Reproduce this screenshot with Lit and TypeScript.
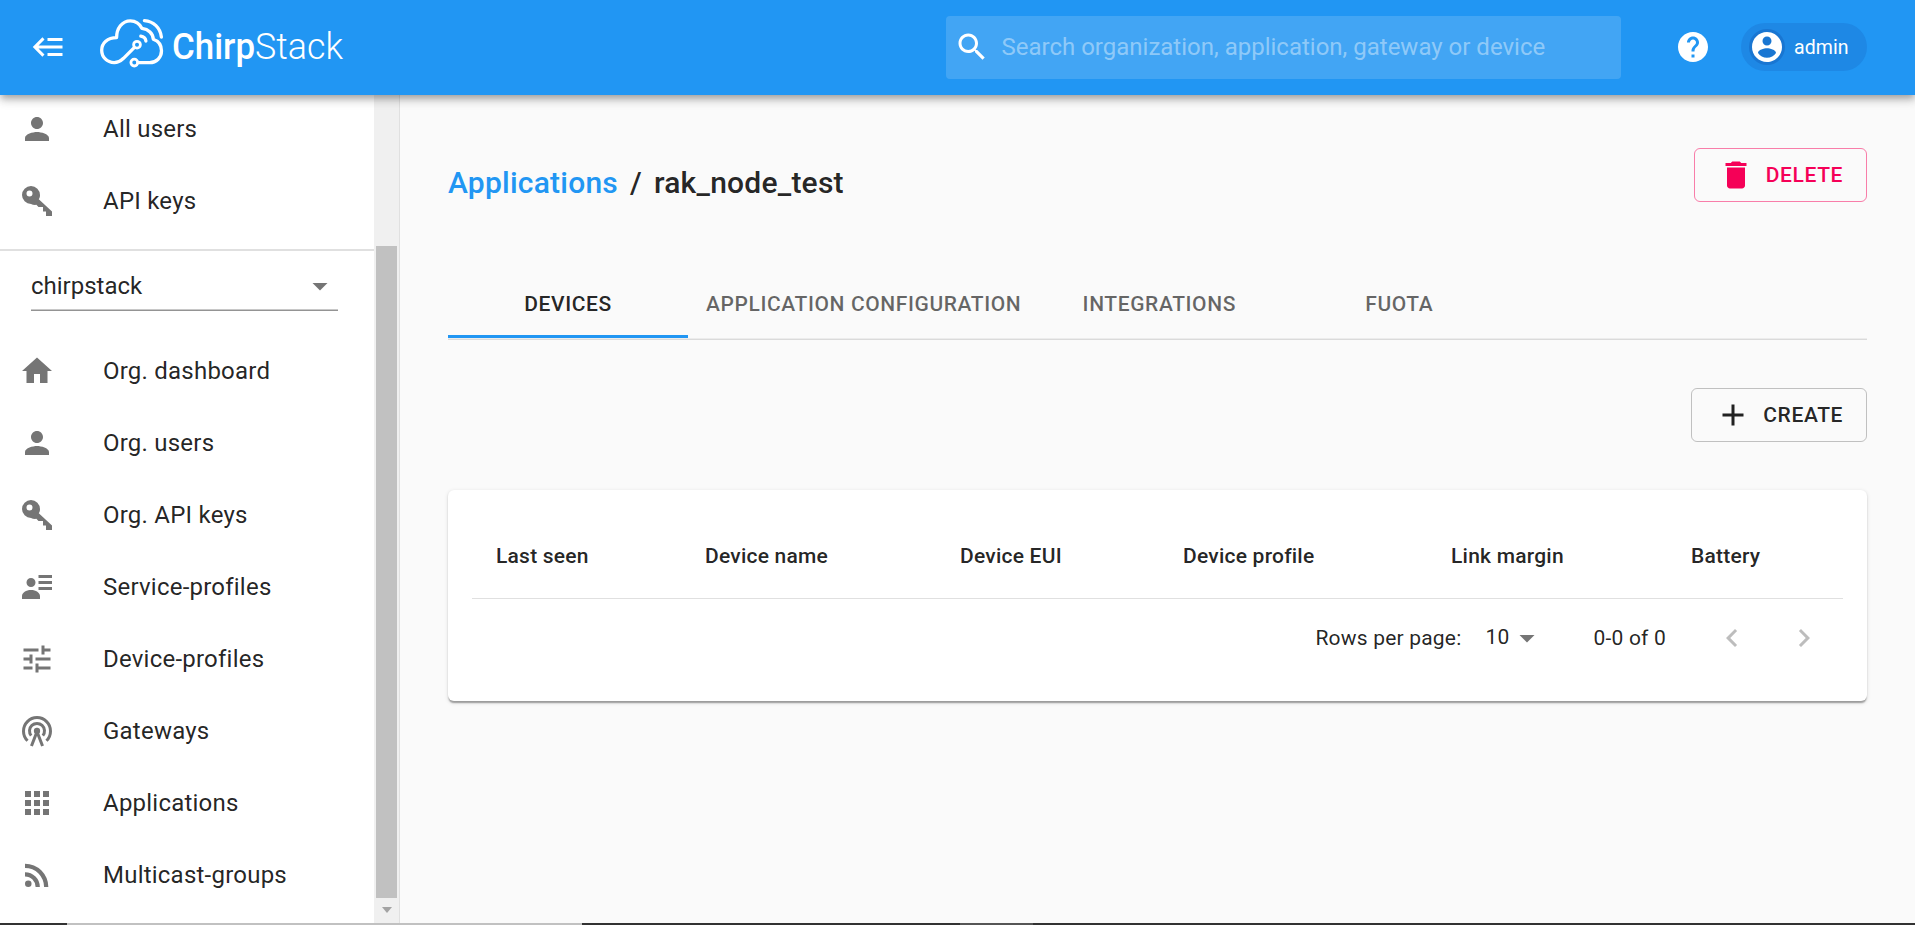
import { LitElement, html, css, svg } from "lit";
import { customElement, property } from "lit/decorators.js";

const ICONS: Record<string, string> = {
  back: "M5,13L9,17L7.6,18.42L1.18,12L7.6,5.58L9,7L5,11H21V13H5M21,6V8H11V6H21M21,16V18H11V16H21Z",
  search: "M15.5 14h-.79l-.28-.27C15.41 12.59 16 11.11 16 9.5 16 5.91 13.09 3 9.5 3S3 5.91 3 9.5 5.91 16 9.5 16c1.61 0 3.09-.59 4.23-1.57l.27.28v.79l5 4.99L20.49 19l-4.99-5zm-6 0C7.01 14 5 11.99 5 9.5S7.01 5 9.5 5 14 7.01 14 9.5 11.99 14 9.5 14z",
  help: "M12 2C6.48 2 2 6.48 2 12s4.48 10 10 10 10-4.48 10-10S17.52 2 12 2zm1 17h-2v-2h2v2zm2.07-7.75l-.9.92C13.45 12.9 13 13.5 13 15h-2v-.5c0-1.1.45-2.1 1.17-2.83l1.24-1.26c.37-.36.59-.86.59-1.41 0-1.1-.9-2-2-2s-2 .9-2 2H8c0-2.21 1.79-4 4-4s4 1.79 4 4c0 .88-.36 1.68-.93 2.25z",
  account: "M12 2C6.48 2 2 6.48 2 12s4.48 10 10 10 10-4.48 10-10S17.52 2 12 2zm0 3c1.66 0 3 1.34 3 3s-1.34 3-3 3-3-1.34-3-3 1.34-3 3-3zm0 14.2c-2.5 0-4.71-1.28-6-3.22.03-1.99 4-3.08 6-3.08 1.99 0 5.97 1.09 6 3.08-1.29 1.94-3.5 3.22-6 3.22z",
  person: "M12 12c2.21 0 4-1.79 4-4s-1.79-4-4-4-4 1.79-4 4 1.79 4 4 4zm0 2c-2.67 0-8 1.34-8 4v2h16v-2c0-2.66-5.33-4-8-4z",
  key: "M22,19V22H18V19H16V16H13L11.56,14.56A6 6 0 0,1 8,14A6,6 0 0,1 2,8A6,6 0 0,1 8,2A6,6 0 0,1 14,8C14,9.02 13.8,10 13.2,10.9L22,19M7,5A2,2 0 0,0 5,7A2,2 0 0,0 7,9A2,2 0 0,0 9,7A2,2 0 0,0 7,5Z",
  home: "M10 20v-6h4v6h5v-8h3L12 3 2 12h3v8z",
  service: "M8,6A3,3 0 1,1 8,12A3,3 0 1,1 8,6M2,20V18C2,15.8 4.7,14 8,14C11.3,14 14,15.8 14,18V20H2M13,4H22V6H13V4M13,8H22V10H13V8M13,12H22V14H13V12",
  tune: "M3 17v2h6v-2H3zM3 5v2h10V5H3zm10 16v-2h8v-2h-8v-2h-2v6h2zM7 9v2H3v2h4v2h2V9H7zm14 4v-2H11v2h10zm-6-4h2V7h4V5h-4V3h-2v6z",
  apps: "M4 8h4V4H4v4zm6 12h4v-4h-4v4zm-6 0h4v-4H4v4zm0-6h4v-4H4v4zm6 0h4v-4h-4v4zm6-10v4h4V4h-4zm-6 4h4V4h-4v4zm6 6h4v-4h-4v4zm0 6h4v-4h-4v4z",
  rss: "M6.18 15.64a2.18 2.18 0 1 1 0 4.36 2.18 2.18 0 0 1 0-4.36M4 4.44A15.56 15.56 0 0 1 19.56 20h-2.83A12.73 12.73 0 0 0 4 7.27V4.44m0 5.66a9.9 9.9 0 0 1 9.9 9.9h-2.83A7.07 7.07 0 0 0 4 12.93V10.1z",
  trash: "M6 19c0 1.1.9 2 2 2h8c1.1 0 2-.9 2-2V7H6v12zM19 4h-3.5l-1-1h-5l-1 1H5v2h14V4z",
  plus: "M19 13h-6v6h-2v-6H5v-2h6V5h2v6h6v2z",
  drop: "M7 10l5 5 5-5z",
  left: "M15.41 7.41L14 6l-6 6 6 6 1.41-1.41L10.83 12z",
  right: "M10 6L8.59 7.41 13.17 12l-4.58 4.59L10 18l6-6z",
};

@customElement("md-icon")
class MdIcon extends LitElement {
  @property() name = "";
  static styles = css`
    :host { display: block; width: 36px; height: 36px; flex: none; }
    .glyph { display: block; width: 100%; height: 100%; fill: currentColor; }
    .line { fill: none; stroke: currentColor; stroke-width: 2; }
  `;
  render() {
    if (this.name === "gateway") {
      return html`<svg class="glyph" viewBox="0 0 24 24">
        ${svg`<path class="line" d="M5.7 18.5A9 9 0 1 1 18.3 18.5"/>
        <path class="line" d="M8.1 15.1A5 5 0 1 1 15.9 15.1"/>
        <circle cx="12" cy="12" r="2.1"/>
        <path class="line" d="M8.3 22L12 12.5L15.7 22"/>`}
      </svg>`;
    }
    return html`<svg class="glyph" viewBox="0 0 24 24"><path fill-rule="evenodd" d=${ICONS[this.name] ?? ""}></path></svg>`;
  }
}

@customElement("side-item")
class SideItem extends LitElement {
  @property() icon = "";
  @property() label = "";
  static styles = css`
    :host { display: block; }
    .row { display: flex; align-items: center; height: 72px; padding-left: 19px; color: rgba(0, 0, 0, 0.87); }
    .icon { color: #757575; }
    .text { margin-left: 48px; line-height: 36px; letter-spacing: 0.225px; white-space: nowrap; }
  `;
  render() {
    return html`<div class="row"><md-icon class="icon" name=${this.icon}></md-icon><span class="text">${this.label}</span></div>`;
  }
}

@customElement("app-root")
class AppRoot extends LitElement {
  static styles = css`
    * { box-sizing: border-box; }
    :host {
      display: flex; flex-direction: column; width: 100%; height: 925px; overflow: hidden;
      background: #fafafa; color: rgba(0, 0, 0, 0.87);
      font-family: Roboto, "Liberation Sans", sans-serif; font-size: 24px;
    }
    .bar {
      position: relative; z-index: 2; flex: none; height: 95px; display: flex; align-items: center;
      padding: 0 48px 1px 31px; background: #2196f3; color: #fff;
      box-shadow: 0 3px 6px -1.5px rgba(0, 0, 0, 0.2), 0 6px 7.5px rgba(0, 0, 0, 0.14), 0 1.5px 15px rgba(0, 0, 0, 0.12);
    }
    .logo { display: block; width: 250px; height: 94px; margin-left: 31px; flex: none; }
    .trace { fill: none; stroke: #fff; stroke-width: 3.3; stroke-linecap: round; stroke-linejoin: round; }
    .node { stroke-width: 2.8; }
    .word { fill: #fff; font-family: Roboto, sans-serif; font-size: 37px; }
    .bold { font-weight: 500; }
    .light { font-weight: 300; }
    .search {
      display: flex; align-items: center; margin-left: auto; margin-top: 1px; width: 675px; height: 63px; padding: 0 8px 1px;
      border-radius: 4px; background: rgba(255, 255, 255, 0.15);
    }
    .hint { margin-left: 11.5px; color: rgba(255, 255, 255, 0.42); white-space: nowrap; }
    .help { margin-left: 54px; }
    .chip { display: flex; align-items: center; width: 126px; height: 48px; margin-left: 30px; padding-left: 8px; border-radius: 24px; background: #1e88e5; font-size: 19.5px; }
    .avatar { border-radius: 50%; background: #1976d2; }
    .user { margin-left: 9px; letter-spacing: 0.1px; }
    .body { flex: 1; min-height: 0; display: flex; }
    .side { width: 400px; flex: none; display: flex; background: #fff; border-right: 1px solid #e0e0e0; }
    .menu { width: 374px; margin-top: -2.5px; }
    .split { height: 2px; margin: 12px 0 0; background: #e0e0e0; }
    .select { display: flex; justify-content: space-between; align-items: center; height: 60.5px; margin: 0 36px 24px 31px; padding: 11px 0 0; border-bottom: 1px solid #949494; box-shadow: inset 0 -1px #c8c8c8; }
    .arrow { color: #757575; }
    .scroll { width: 25px; background: #f0f0f0; display: flex; flex-direction: column; align-items: center; padding: 151px 0 0; }
    .thumb { width: 21px; height: 652px; background: #c1c1c1; }
    .down { margin-top: 9px; border: 5.5px solid transparent; border-top: 6px solid #a3a3a3; border-bottom: 0; }
    .main { flex: 1; padding: 53px 48px 0; }
    .head { display: flex; justify-content: space-between; height: 118px; }
    .title { display: flex; padding-top: 11px; height: 72px; line-height: 48px; font-size: 30px; font-weight: 500; letter-spacing: 0.225px; white-space: pre; }
    .link { color: #2196f3; }
    .slash { margin: 0 12px; }
    .btn { display: flex; align-items: center; height: 54px; padding: 0 23px; border: 1px solid rgba(0, 0, 0, 0.23); border-radius: 6px; font-size: 21px; font-weight: 500; letter-spacing: 0.6px; white-space: nowrap; }
    .danger { color: #f50057; border-color: rgba(245, 0, 87, 0.5); }
    .label { margin-left: 12px; }
    .tabs { display: flex; height: 74px; border-bottom: 1px solid #dadada; box-shadow: inset 0 -1px #ececec; }
    .tab { display: flex; align-items: center; justify-content: center; min-width: 240px; height: 72px; padding: 6px 18px 0; font-size: 21px; font-weight: 500; letter-spacing: 0.6px; color: rgba(0, 0, 0, 0.6); border-bottom: 3px solid transparent; white-space: nowrap; }
    .active { color: rgba(0, 0, 0, 0.87); border-bottom-color: #2196f3; }
    .actions { display: flex; justify-content: flex-end; padding: 48px 0; }
    .card { height: 211px; padding: 24px; background: #fff; border-radius: 6px; box-shadow: 0 3px 1.5px -1.5px rgba(0, 0, 0, 0.2), 0 1.5px 1.5px rgba(0, 0, 0, 0.14), 0 1.5px 4.5px rgba(0, 0, 0, 0.12); }
    .cols { display: grid; grid-template-columns: 209px 255px 223px 268px 240px 1fr; height: 85px; padding: 0 0 1px 24px; align-items: center; border-bottom: 1px solid #e0e0e0; font-size: 21px; font-weight: 500; letter-spacing: 0.225px; }
    .pager { display: flex; align-items: center; justify-content: flex-end; height: 78px; font-size: 21px; letter-spacing: 0.2px; padding-right: 21px; }
    .count { margin: 0 0 2px 24px; }
    .drop { color: #757575; }
    .range { margin: 0 48px; }
    .nav { color: rgba(0, 0, 0, 0.26); }
    .next { margin-left: 36px; }
    .strip { flex: none; height: 2px; display: flex; background: #323232; }
    .gap { width: 67px; }
    .gray { width: 515px; background: #c1c1c1; }
    .wide { width: 378px; }
    .mid { width: 73px; background: #555; }
  `;

  render() {
    const tabs = ["DEVICES", "APPLICATION CONFIGURATION", "INTEGRATIONS", "FUOTA"];
    const cols = ["Last seen", "Device name", "Device EUI", "Device profile", "Link margin", "Battery"];
    const org = [
      ["home", "Org. dashboard"], ["person", "Org. users"], ["key", "Org. API keys"], ["service", "Service-profiles"],
      ["tune", "Device-profiles"], ["gateway", "Gateways"], ["apps", "Applications"], ["rss", "Multicast-groups"],
    ];
    return html`
      <header class="bar">
        <md-icon name="back"></md-icon>
        <svg class="logo" viewBox="98 0 250 94">
          <path class="trace" d="M134.2 47.6L123.5 58.3Q119 62.6 114.2 62.6C107 62.6 101.7 57 101.7 50.2C101.7 43 107.5 37.6 116.6 37.6C116.6 28.5 122 20.8 130.4 20.8C136 20.8 139.8 24 142 28.4C148.5 29.2 153 33.5 153.3 39.2C158 40.8 161.5 45 161.5 50.8C161.5 57.5 156.5 62.6 149.5 62.6H138"></path>
          <circle class="trace node" cx="137" cy="44.7" r="3.4"></circle>
          <circle class="trace node" cx="134.3" cy="62.6" r="3.4"></circle>
          <path class="trace" d="M144.4 20.6C153.5 21.2 160.5 28 161.4 37.2"></path>
          <path class="trace" d="M140.8 36.2C143.7 36.6 145.5 38.3 145.9 41"></path>
          <text class="word bold" x="172" y="58.5" textLength="83" lengthAdjust="spacingAndGlyphs">Chirp</text>
          <text class="word light" x="255" y="58.5" textLength="88" lengthAdjust="spacingAndGlyphs">Stack</text>
        </svg>
        <div class="search"><md-icon name="search"></md-icon><span class="hint">Search organization, application, gateway or device</span></div>
        <md-icon class="help" name="help"></md-icon>
        <div class="chip"><md-icon class="avatar" name="account"></md-icon><span class="user">admin</span></div>
      </header>
      <div class="body">
        <nav class="side">
          <div class="menu">
            <side-item icon="person" label="All users"></side-item>
            <side-item icon="key" label="API keys"></side-item>
            <div class="split"></div>
            <div class="select"><span>chirpstack</span><md-icon class="arrow" name="drop"></md-icon></div>
            ${org.map(([icon, label]) => html`<side-item icon=${icon} label=${label}></side-item>`)}
          </div>
          <div class="scroll"><div class="thumb"></div><div class="down"></div></div>
        </nav>
        <main class="main">
          <div class="head">
            <div class="title"><span class="link">Applications</span><span class="slash">/</span><span>rak_node_test</span></div>
            <div class="btn danger"><md-icon name="trash"></md-icon><span class="label">DELETE</span></div>
          </div>
          <div class="tabs">${tabs.map((t, i) => html`<div class="tab ${i === 0 ? "active" : ""}">${t}</div>`)}</div>
          <div class="actions"><div class="btn"><md-icon name="plus"></md-icon><span class="label">CREATE</span></div></div>
          <section class="card">
            <div class="cols">${cols.map((c) => html`<span>${c}</span>`)}</div>
            <div class="pager">
              <span>Rows per page:</span><span class="count">10</span><md-icon class="drop" name="drop"></md-icon>
              <span class="range">0-0 of 0</span>
              <md-icon class="nav" name="left"></md-icon><md-icon class="nav next" name="right"></md-icon>
            </div>
          </section>
        </main>
      </div>
      <div class="strip"><div class="gap"></div><div class="gray"></div><div class="wide"></div><div class="mid"></div></div>
    `;
  }
}
